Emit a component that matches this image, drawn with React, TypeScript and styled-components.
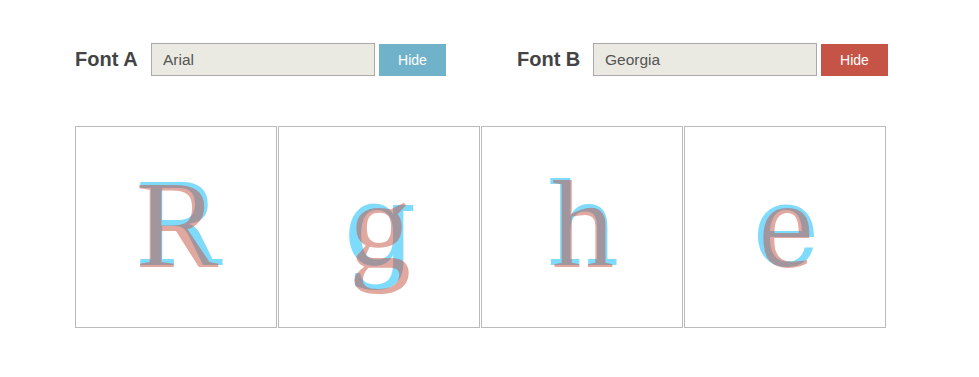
import React from "react";
import styled, { createGlobalStyle } from "styled-components";

const GlobalStyle = createGlobalStyle`
  body {
    margin: 0;
    background: #ffffff;
    font-family: "Liberation Sans", Arial, sans-serif;
  }
`;

const Page = styled.div`
  padding: 43px 0 0 75px;
  width: 811px;
`;

const Controls = styled.div`
  display: grid;
  grid-template-columns: 442px auto;
  height: 33px;
`;

const Group = styled.div`
  display: flex;
  align-items: center;
`;

const Label = styled.label`
  width: 76px;
  font-size: 20px;
  font-weight: bold;
  color: #444444;
`;

const FontInput = styled.input`
  box-sizing: border-box;
  width: 224px;
  height: 33px;
  margin: 0 4px 0 0;
  padding: 0 11px;
  border: 1px solid #aaaaaa;
  background: #eae9e2;
  font-family: "Liberation Sans", Arial, sans-serif;
  font-size: 15.5px;
  color: #555555;
  outline: none;
`;

const HideButton = styled.button<{ $tone: string }>`
  width: 67px;
  height: 32px;
  border: none;
  padding: 0;
  background: ${(p) => p.$tone};
  color: #ffffff;
  font-family: "Liberation Sans", Arial, sans-serif;
  font-size: 14px;
  cursor: pointer;
`;

const Grid = styled.div`
  display: flex;
  gap: 1px;
  margin-top: 50px;
`;

const Cell = styled.div`
  position: relative;
  box-sizing: border-box;
  width: 202px;
  height: 202px;
  border: 1px solid #bbbbbb;
`;

const Glyph = styled.span<{ $font: string; $color: string; $size: number }>`
  position: absolute;
  inset: 0 0 2px 2px;
  display: flex;
  align-items: center;
  justify-content: center;
  font-family: ${(p) => p.$font};
  font-size: ${(p) => p.$size}px;
  line-height: 1;
  color: ${(p) => p.$color};
  opacity: 0.5;
`;

const RED = "#c65446";
const BLUE = "#70b2ca";
const letters = ["R", "g", "h", "e"];

export default function App() {
  return (
    <>
      <GlobalStyle />
      <Page>
        <Controls>
          <Group>
            <Label>Font A</Label>
            <FontInput defaultValue="Arial" />
            <HideButton $tone={BLUE}>Hide</HideButton>
          </Group>
          <Group>
            <Label>Font B</Label>
            <FontInput defaultValue="Georgia" />
            <HideButton $tone={RED}>Hide</HideButton>
          </Group>
        </Controls>
        <Grid>
          {letters.map((ch) => (
            <Cell key={ch}>
              <Glyph $font={'"DejaVu Serif", serif'} $color="#00b9fb" $size={114}>
                {ch}
              </Glyph>
              <Glyph $font={'"Liberation Serif", serif'} $color="#c55343" $size={124}>
                {ch}
              </Glyph>
            </Cell>
          ))}
        </Grid>
      </Page>
    </>
  );
}
